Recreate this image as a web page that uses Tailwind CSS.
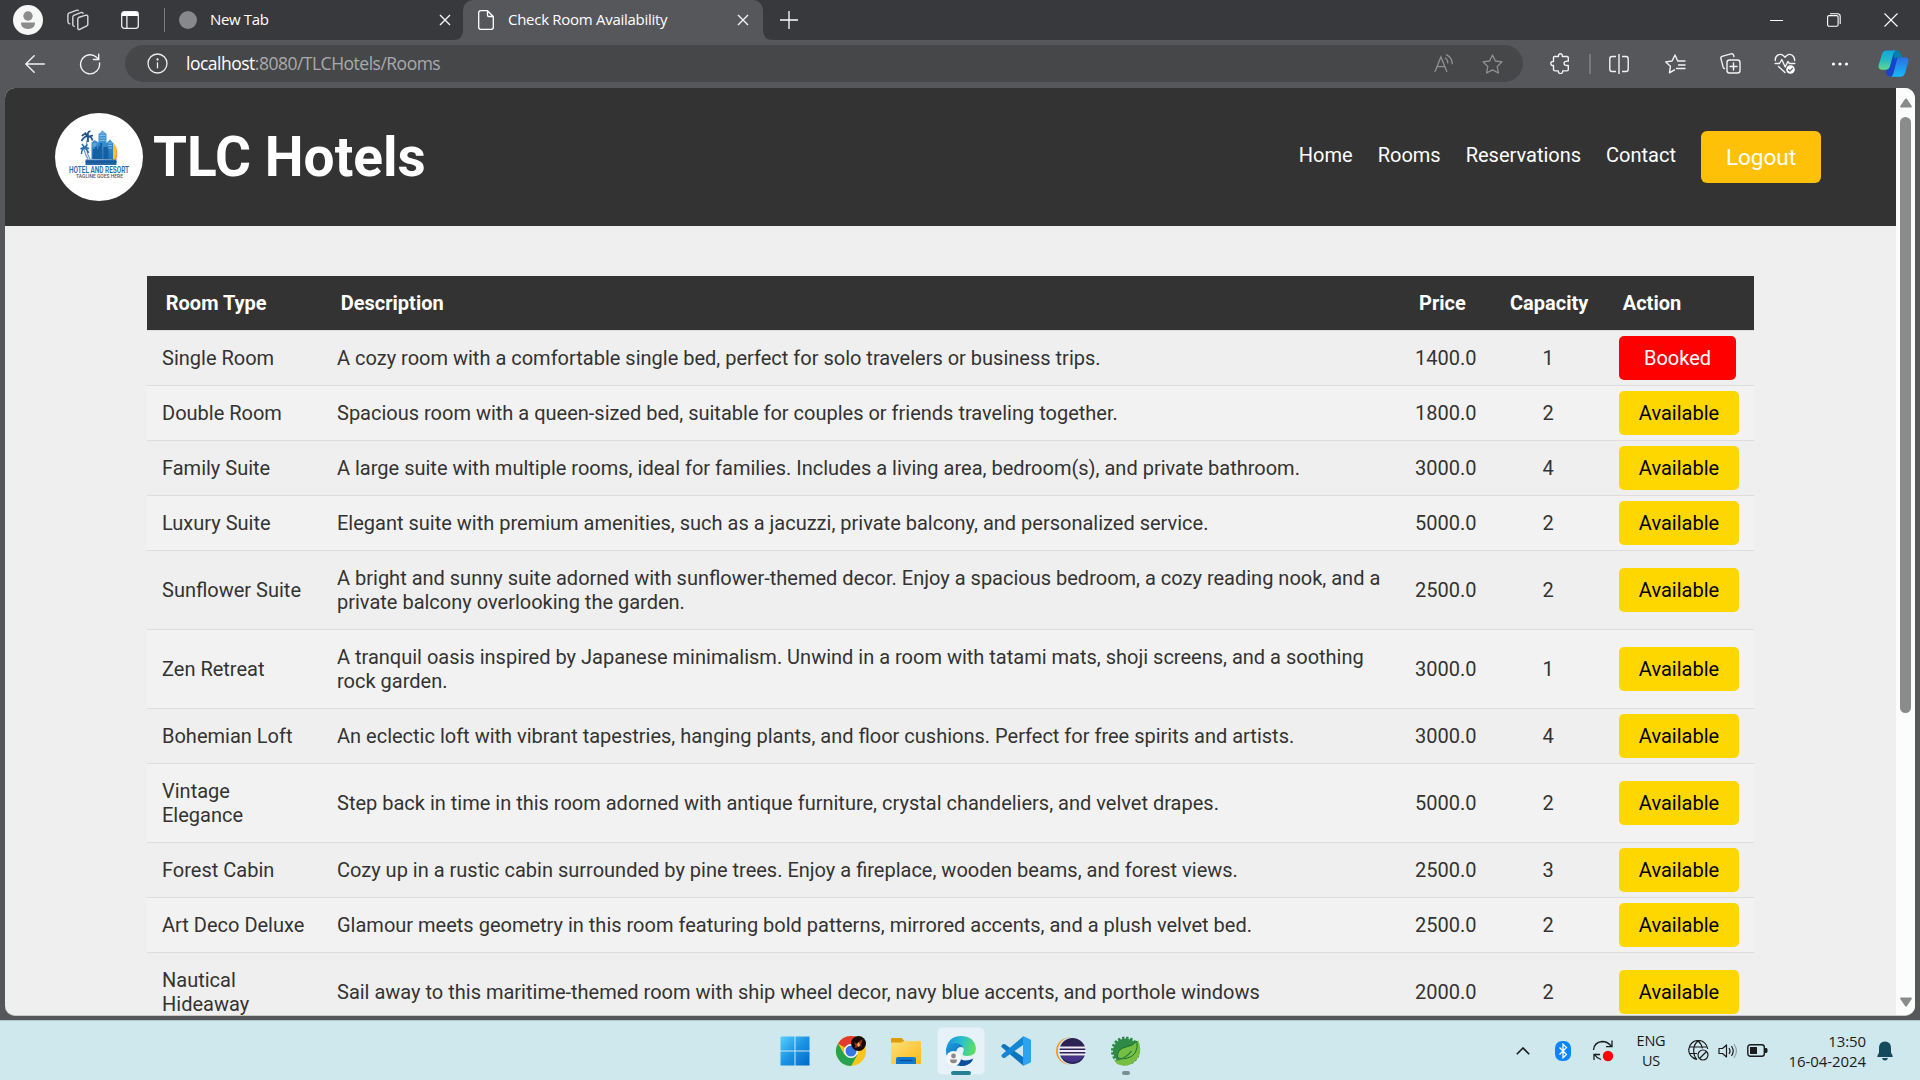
<!DOCTYPE html>
<html lang="en">
<head>
<meta charset="utf-8">
<title>Check Room Availability</title>
<script src="https://cdn.jsdelivr.net/npm/@tailwindcss/browser@4"></script>
</head>
<body class="w-[1920px] h-[1080px] overflow-hidden flex flex-col bg-[#56575b] font-['Open_Sans','Noto_Sans',sans-serif]">

<!-- Tab strip -->
<div class="h-10 shrink-0 flex items-center bg-[#38393c] text-white text-[15px]">
  <div class="w-14 flex justify-center"><svg width="30" height="30" viewBox="0 0 30 30"><circle cx="15" cy="15" r="15" fill="#f7f7f7"/><circle cx="15" cy="11" r="4.7" fill="#8b8b8b"/><path d="M8 17.500h14q.3 6.500-7 6.500t-7-6.500z" fill="#8b8b8b"/></svg></div>
  <div class="w-11 flex justify-center"><svg width="22" height="22" viewBox="0 0 22 22" fill="none" stroke="#d8d8d9" stroke-width="1.400" stroke-linejoin="round"><path d="M11.500 8.500l7.500-2.300q1.800-.4 1.800 1.200v8.100q0 1-1 1.400l-7 3.400q-2 .7-2-1v-9q0-1.400.7-1.800z"/><path d="M7.800 17.500l-1-.3q-1-.4-1-1.700V8.200q0-1.300 1-1.800l7.500-3q1.600-.3 1.800 1.400"/><path d="M3.300 15l-1-.4q-1.400-.6-1.400-1.900V6q0-1.300 1-1.800L10 1.200q1-.3 1.600.6"/></svg></div>
  <div class="w-[60px] flex justify-center"><svg width="18" height="18" viewBox="0 0 18 18"><rect x=".7" y=".7" width="16.600" height="16.600" rx="2.500" fill="none" stroke="#eee" stroke-width="1.300"/><path d="M1 5V3q0-2 2-2h12q2 0 2 2v2zM5.300 5h1.200v12H5.300z" fill="#fff"/></svg></div>
  <div class="ml-1 w-px h-6 bg-[#7a7b7e]"></div>
  <div class="h-10 w-[298px] flex items-center">
    <div class="ml-3.5 size-[18px] rounded-full bg-[#87888a]"></div>
    <span class="ml-[13px] w-[221px] pb-0.5 tracking-[-0.35px]">New Tab</span>
    <svg class="ml-2" width="12" height="12" viewBox="0 0 12 12" stroke="#f4f4f4" stroke-width="1.400"><path d="M1 1l10 10M11 1L1 11"/></svg>
  </div>
  <div class="relative h-10 w-[300px] flex items-center rounded-t-[10px] bg-[#56575b]">
    <svg class="absolute -left-2.5 bottom-0" width="10" height="10" viewBox="0 0 10 10"><path d="M10 0v10H0Q10 10 10 0z" fill="#56575b"/></svg>
    <svg class="absolute -right-2.5 bottom-0" width="10" height="10" viewBox="0 0 10 10"><path d="M0 0v10h10Q0 10 0 0z" fill="#56575b"/></svg>
    <svg class="ml-[15px]" width="16" height="20" viewBox="0 0 16 20" fill="none" stroke="#fff" stroke-width="1.300" stroke-linejoin="round"><path d="M9.500.7H2.700q-2 0-2 2v14.600q0 2 2 2h10.600q2 0 2-2V6.500zM9.500.7v4.600q0 1.200 1.200 1.200h4.600"/></svg>
    <span class="ml-3.5 w-[226px] pb-0.5 tracking-[-0.28px]">Check Room Availability</span>
    <svg class="ml-[3px]" width="12" height="12" viewBox="0 0 12 12" stroke="#f4f4f4" stroke-width="1.400"><path d="M1 1l10 10M11 1L1 11"/></svg>
  </div>
  <svg class="ml-[17px]" width="18" height="18" viewBox="0 0 18 18" stroke="#fff" stroke-width="1.300"><path d="M9 0v18M0 9h18"/></svg>
  <div class="ml-auto flex items-center">
    <div class="w-[57px] flex justify-center"><svg width="13" height="13" stroke="#fff"><path d="M0 6.500h13"/></svg></div>
    <div class="w-[57px] flex justify-center"><svg width="14" height="14" viewBox="0 0 14 14" fill="none" stroke="#fff" stroke-width="1.100"><rect x=".6" y="2.600" width="10.500" height="10.700" rx="1.500"/><path d="M3 .7h7.500q2.700 0 2.700 2.700V11"/></svg></div>
    <div class="w-[58px] flex justify-center"><svg width="14" height="14" viewBox="0 0 14 14" stroke="#fff" stroke-width="1.100"><path d="M.5.500l13 13M13.500.500l-13 13"/></svg></div>
  </div>
</div>

<!-- Toolbar -->
<div class="h-12 shrink-0 flex items-start pt-[5px] text-white">
  <div class="h-[37px] w-[70px] flex items-center justify-center"><svg width="20" height="18" viewBox="0 0 20 18" fill="none" stroke="#f2f2f2" stroke-width="1.400" stroke-linecap="round" stroke-linejoin="round"><path d="M19.300 9H.8M9.200.8L.8 9l8.400 8.200"/></svg></div>
  <div class="h-[37px] w-10 flex items-center justify-center"><svg width="22" height="22" viewBox="0 0 22 22" fill="none" stroke="#f2f2f2" stroke-width="1.400" stroke-linecap="round"><path d="M20.500 10A9.500 9.500 0 1 1 17.500 4.300L19.500 6.200"/><path d="M19.700 1.200v5.300h-5.300"/></svg></div>
  <div class="ml-[15px] h-[37px] w-[1398px] flex items-center rounded-full bg-[#464749]">
    <svg class="ml-[22px]" width="21" height="21" viewBox="0 0 21 21" fill="none" stroke="#eee" stroke-width="1.300"><circle cx="10.500" cy="10.500" r="9.500"/><path d="M10.500 9.300v6"/><circle cx="10.500" cy="6.500" r=".5" fill="#eee"/></svg>
    <span class="ml-[18px] text-[17.500px] pb-px tracking-[-0.5px] text-[#a9aaac]"><span class="text-white">localhost</span>:8080/TLCHotels/Rooms</span>
    <div class="ml-auto flex items-center">
      <div class="w-[49px] flex justify-center"><svg width="20" height="19" viewBox="0 0 20 19" fill="none" stroke="#919294" stroke-width="1.300" stroke-linecap="round"><path d="M1 17.500L6.900 3l5.900 14.500M3 12.700h7.800M11.300 4.200q2.500 1.400 2.500 4.600M12.600.8q5.400 2.500 5.700 9"/></svg></div>
      <div class="w-[49px] flex justify-center"><svg width="21" height="20" viewBox="0 0 21 20" fill="none" stroke="#919294" stroke-width="1.300" stroke-linejoin="round"><path d="M10.500 1l2.900 6 6.600.9-4.800 4.600 1.200 6.500-5.900-3.100L4.600 19l1.200-6.500L1 7.900 7.600 7z"/></svg></div>
      <div class="w-1.5"></div>
    </div>
  </div>
  <div class="ml-2 h-[37px] flex items-center">
    <div class="w-14 pl-px flex justify-center"><svg width="20" height="21" viewBox="0 0 20 21" fill="none" stroke="#f2f2f2" stroke-width="1.400" stroke-linejoin="round"><path d="M4.500 3.500h4q-.2-2.800 1.900-2.800t1.900 2.800H17q1.300 0 1.300 1.300v3.400q-4.300-.4-4.300 2.100t4.300 2.100v4.100q0 1.400-1.300 1.400h-4.300q.1 2.700-2.200 2.700t-2.200-2.700H5q-1.500 0-1.500-1.400v-4Q.8 12.700.8 10.500t2.700-2V4.800q0-1.300 1-1.300z"/></svg></div>
    <div class="w-1.5 flex justify-center"><div class="w-0.5 h-5 bg-[#77787b]"></div></div>
    <div class="w-[52px] flex justify-center"><svg width="20" height="20" viewBox="0 0 20 20" fill="none" stroke="#f2f2f2" stroke-width="1.400"><path d="M10 0v20M7 2.500H3Q.8 2.500.8 4.700v10.600q0 2.200 2.200 2.200h4M13 2.500h4q2.200 0 2.200 2.200v10.600q0 2.200-2.200 2.200h-4"/></svg></div>
    <div class="w-[60px] flex justify-center"><svg width="21" height="20" viewBox="0 0 21 20" fill="none" stroke="#f2f2f2" stroke-width="1.400" stroke-linejoin="round" stroke-linecap="round"><path d="M9.500 15.800l-5 3 .9-6.500L.8 7.900l6.300-.9L10 1l2.700 6h4.800M13.500 11H20M11.500 14.500H20M15 7h5"/></svg></div>
    <div class="w-[50px] flex justify-center"><svg width="21" height="21" viewBox="0 0 21 21" fill="none" stroke="#f2f2f2" stroke-width="1.400" stroke-linecap="round"><rect x="7" y="7" width="13" height="13" rx="2.500"/><path d="M13.500 10v7M10 13.500h7M4.500 15.500q-1 0-1.300-1.200L.9 5.600Q.5 4 2 3.400L11 .9q2-.5 2.500 1l.4 1.700"/></svg></div>
    <div class="w-[60px] flex justify-center"><svg width="22" height="21" viewBox="0 0 22 21" fill="none" stroke="#f2f2f2" stroke-width="1.400" stroke-linecap="round" stroke-linejoin="round"><path d="M1.300 7.500Q1 3.800 3.800 2.100T9.500 2.700L11 4.200l1.500-1.500Q15 .5 17.800 2t2.900 5.500M1.200 10.500h4.300l2.300-4 3.400 7.500 2.700-5.500 1.500 2h5.400M4.500 13.500l6.500 6"/><circle cx="16.500" cy="16.500" r="4.300" fill="#fff" stroke="none"/><path d="M14.500 16.700l1.400 1.300 2.600-2.700" stroke="#56575b" stroke-width="1.200"/></svg></div>
    <div class="w-[50px] flex justify-center"><svg width="18" height="4" viewBox="0 0 18 4" fill="#fff"><circle cx="2.500" cy="2" r="1.600"/><circle cx="9" cy="2" r="1.600"/><circle cx="15.500" cy="2" r="1.600"/></svg></div>
    <div class="w-[55px] pl-px flex justify-center"><svg width="31" height="27" viewBox="0 0 31 27"><defs><linearGradient id="ca" x1="0" y1="0" x2="0" y2="1"><stop offset="0" stop-color="#0fa8de"/><stop offset=".5" stop-color="#27b9c2"/><stop offset="1" stop-color="#62d88d"/></linearGradient><linearGradient id="cb" x1="0" y1="0" x2="0" y2="1"><stop offset="0" stop-color="#2a70e0"/><stop offset="1" stop-color="#18b8fa"/></linearGradient></defs><path d="M8 20l6-19h5q3 0 3.500 3l1 3.500H20L14 26.500h-2.500Q9 26.500 8 23z" fill="#1545cf"/><path d="M15 .4h4q2.700 0 3.600 3L24 7.500h-4q-3 0-3.500 2z" fill="#077fae"/><path d="M8.500.4H18q-1.700.6-2.500 3.200L11.700 17q-.9 2.700-3.500 2.700H4Q-.3 19.700.7 15L4 4Q5 .4 8.500.4z" fill="url(#ca)"/><path d="M20.500 7.300H27q4.200 0 3.300 4.500L27 23q-1 3.700-4.500 3.700H12.800q1.900-.5 2.700-3.200L19 10q.5-2.700 1.500-2.700z" fill="url(#cb)"/></svg></div>
  </div>
</div>

<!-- Page viewport -->
<div class="mx-[5px] h-[928px] shrink-0 flex overflow-hidden rounded-[10px] bg-[#efefef] border-b border-[#c9c9c9] font-[Roboto,sans-serif]">
  <div class="w-[1891px] h-full overflow-hidden">
    <header class="h-[138px] bg-[#333] text-white flex items-start pl-[50px] pr-[75px]">
      <div class="mt-[25px] flex items-center">
        <svg width="88" height="88" viewBox="0 0 88 88"><defs><linearGradient id="bl" x1="0" y1="0" x2="0" y2="1"><stop offset="0" stop-color="#4c9fd8"/><stop offset="1" stop-color="#1f74bb"/></linearGradient></defs><circle cx="44" cy="44" r="44" fill="#fff"/>
          <path d="M58 29q7 9 2 18h-3z" fill="#fdc21d"/><path d="M59.500 31q4 8 0 15.500h1.800q2.500-8-1.800-15.500z" fill="#f28b4c"/>
          <path d="M36.500 46V29.500l3-2.500 4 2.500V21l4-3.500 4 3.500v9l3.500-3.500 3 3.500v16.500z" fill="url(#bl)"/>
          <path d="M38 46V36h2v-3h2v3h1.500v-3h1.500v-3h2v16zM48.500 46V34h5v12z" fill="#1560a3"/>
          <path d="M44.500 22.500h6M44.500 25h6M44.500 27.500h6M45.500 20h4M37.500 31h4M37.500 33h4M53 30h4M53 32.500h4M53 35h4" stroke="#9fd0ef" stroke-width=".7"/>
          <g fill="none" stroke="#1b5288" stroke-width="1.300"><path d="M33 24q-4 12 2 22M29 36q1 6 4 10" stroke="#7d9cbc"/><path d="M27 23q3-4 6 .5q-1-5 2.500-5.500M26.500 28q3-5 6-4.500q4-.5 5 4M30 19.500l3 4 5-1M33 24v5" stroke-width="1.700"/><path d="M25.500 36l3.500-2 5 1.500M26.500 41q0-5 3-6q3 1 4 5M27 31l2.500 3.500 3-3" stroke="#2870b0" stroke-width="1.500"/></g>
          <path d="M30.500 46.500h31V52h-31z" fill="#2469a7"/><path d="M30.500 49h31" stroke="#0c477f" stroke-width=".8"/>
          <text x="44" y="59.500" text-anchor="middle" textLength="60" lengthAdjust="spacingAndGlyphs" font-family="Roboto" font-weight="600" font-size="9" fill="#1f6aab">HOTEL AND RESORT</text>
          <text x="44.500" y="64.500" text-anchor="middle" textLength="47" lengthAdjust="spacingAndGlyphs" font-family="Roboto" font-weight="500" font-size="5.600" fill="#5a5350">TAGLINE GOES HERE</text></svg>
        <h1 class="ml-2.5 text-[55px] leading-[64px] font-bold">TLC Hotels</h1>
      </div>
      <nav class="ml-auto mt-[43px] flex items-start text-[20px] leading-6 gap-[25px]">
        <a class="mt-3">Home</a><a class="mt-3">Rooms</a><a class="mt-3">Reservations</a><a class="mt-3">Contact</a>
        <a class="w-[120px] h-[52px] rounded-[6px] bg-[#ffc107] text-[22.500px] flex items-center justify-center">Logout</a>
      </nav>
    </header>
    <table class="mt-[50px] ml-[142px] w-[1607px] table-fixed border-collapse text-[20px] leading-6 text-[#333] text-left">
      <colgroup><col class="w-[175px]"><col class="w-[1079px]"><col class="w-[91px]"><col class="w-[112px]"><col class="w-[150px]"></colgroup>
      <thead><tr class="h-[54px] bg-[#333] text-white border-b border-[#ddd]"><th class="px-[18.750px] whitespace-nowrap">Room Type</th><th class="px-[18.750px]">Description</th><th class="pl-[18px]">Price</th><th class="pl-[18px]">Capacity</th><th class="px-[18.750px]">Action</th></tr></thead>
      <tbody id="rooms"></tbody>
    </table>
  </div>
  <div class="w-[19px] h-full bg-[#fcfcfc] flex flex-col items-center">
    <svg class="mt-2.5 shrink-0" width="12" height="10" viewBox="0 0 12 10"><path d="M6 .5q.6 0 1 .6l4.700 7q.6 1.400-.8 1.400H1.100Q-.3 9.500.3 8.100l4.700-7q.4-.6 1-.6z" fill="#8b8b8b"/></svg>
    <div class="mt-[9px] w-[11px] h-[596px] shrink-0 rounded-full bg-[#8b8b8b]"></div>
    <svg class="mt-auto mb-2 shrink-0" width="12" height="10" viewBox="0 0 12 10"><path d="M6 9.500q-.6 0-1-.6L.3 1.900Q-.3.500 1.100.500h9.800q1.400 0 .8 1.400L7 8.900q-.4.6-1 .6z" fill="#8b8b8b"/></svg>
  </div>
</div>

<!-- Taskbar -->
<div class="mt-1 h-[60px] shrink-0 flex items-center bg-[#cfe8ee] border-t border-[#b3c6cc] text-[#1b1b1b]">
  <div class="ml-[767px] flex items-center">
    <div class="w-[55px] flex justify-center"><svg width="30" height="30" viewBox="0 0 30 30"><defs><linearGradient id="wn" x1="0" y1="0" x2="1" y2="1"><stop offset="0" stop-color="#55cffb"/><stop offset=".5" stop-color="#1b94e4"/><stop offset="1" stop-color="#0067c7"/></linearGradient></defs><path d="M1 .5h13.500V14.500H.5V1zM15.500.5H29.500V14.500h-14zM.5 15.500h14v14H.5zM15.500 15.500h14v14h-14z" fill="url(#wn)"/></svg></div>
    <div class="w-[57px] flex justify-center"><svg width="32" height="32" viewBox="0 0 32 32"><circle cx="16" cy="16" r="15" fill="#f9c51c"/><path d="M16 16L3 8.500A15 15 0 0 1 29 8.500H16z" fill="#e33b2e"/><path d="M3 8.500A15 15 0 0 0 16 31l6.500-11.300L16 16 9.500 19.700z" fill="#25a34e"/><circle cx="16" cy="16" r="7" fill="#fff"/><circle cx="16" cy="16" r="5.500" fill="#3478e5"/><circle cx="23.500" cy="8.500" r="7.500" fill="#160b09"/><path d="M18 6q4 4 5 2t5-4q-3 5-1 8-3-3-4-1t-3 2q1-4-2-7z" fill="#a5321c"/><path d="M22 9l2-2 1 4-2 1z" fill="#efb14c"/></svg></div>
    <div class="w-[54px] flex justify-center"><svg width="30" height="28" viewBox="0 0 30 28"><defs><linearGradient id="fo" x1="0" y1="0" x2="1" y2="1"><stop offset="0" stop-color="#ffe07a"/><stop offset="1" stop-color="#fbb917"/></linearGradient></defs><path d="M0 2Q0 1 1 1h9q1 0 1.700 1l1.800 2-2 3H0z" fill="#de9c08"/><path d="M0 5.500h10l3-1.500h16q1 0 1 1v21q0 1-1 1H1q-1 0-1-1z" fill="url(#fo)"/><path d="M5 27v-5q0-2 2-2h16q2 0 2 2v5z" fill="#0f78cf"/><path d="M8.500 23.500h13" stroke="#0b4d93" stroke-width="1.300"/></svg></div>
    <div class="w-[55px] flex justify-center"><div class="relative size-12 rounded-[5px] bg-[#e6f2f7] border border-[#dcebf0] flex justify-center items-center"><svg width="30" height="30" viewBox="0 0 30 30"><defs><linearGradient id="e1" x1="0" y1=".3" x2="1" y2=".5"><stop offset="0" stop-color="#1a8fd8"/><stop offset=".5" stop-color="#2cc0cf"/><stop offset="1" stop-color="#5fe05a"/></linearGradient><linearGradient id="e2" x1="0" y1="0" x2="1" y2="1"><stop offset="0" stop-color="#1b9de2"/><stop offset="1" stop-color="#0b4ea0"/></linearGradient></defs><path d="M0 14Q2 0 15 0q13 0 15 12 0 8-8.500 8-6.500 0-4.500-3.500 1.500-3 0-5.500Q12 6 0 14z" fill="url(#e1)"/><path d="M0 14Q2 7 9 7q6 0 8.500 5-3-2-6 .5-3 4 1 9.500 5 6 14.500 2Q23 30 15 30 0 29 0 14z" fill="url(#e2)"/><path d="M12 21q5 6 15.500 1.500Q23 30 15 30q-4-2-3-9z" fill="#0d4f9c"/><circle cx="7.500" cy="22.500" r="7.500" fill="#f4f6f7"/><circle cx="7.500" cy="20" r="2.400" fill="#8a8a8a"/><path d="M4 23.500h7q.2 3.800-3.500 3.800T4 23.500z" fill="#8a8a8a"/></svg><div class="absolute bottom-[-1px] left-[13px] w-5 h-1 rounded-full bg-[#267f92]"></div></div></div>
    <div class="w-[55px] flex justify-center"><svg width="30" height="30" viewBox="0 0 30 30"><path d="M1.500 8.500q-2 1.500-.5 3L22 29.500V21L4 8.300Q2.700 7.500 1.500 8.500z" fill="#0b75c0"/><path d="M1.500 21.500q-2-1.500-.5-3L22 .5V9L4 21.700q-1.300.8-2.500-.2z" fill="#1486d2"/><path d="M22 0l7 3.200q1 .6 1 1.600v20.400q0 1-1 1.600L22 30z" fill="#2aa3f2"/></svg></div>
    <div class="w-[55px] flex justify-center"><svg width="30" height="28" viewBox="0 0 30 28"><circle cx="13.500" cy="14" r="13.500" fill="#f7941e"/><circle cx="15.500" cy="14" r="13.800" fill="#cfe8ee"/><circle cx="16.500" cy="14" r="13" fill="#2c2255"/><path d="M5 19h23q-4 6-11.500 6T5 19z" fill="#44348a"/><path d="M3 10.500h27M3 14h27M3 17.500h27" stroke="#eceaf4" stroke-width="1.800"/></svg></div>
    <div class="relative w-[55px] flex justify-center"><svg width="30" height="30" viewBox="0 0 30 30"><circle cx="14.500" cy="15" r="13" fill="none" stroke="#2e8b46" stroke-width="3" stroke-dasharray="2.400 1.700"/><circle cx="14.500" cy="15" r="12.500" fill="#2e8b46"/><path d="M27 4q5 11-1 19-8 10-20 5l-3-4q9-1 15-5Q26 13 27 4z" fill="#77bf43"/><path d="M26 5q2 15-11 17.500-5 1-8.500-1Q6 13 15 11q7-1 11-6z" fill="#77bf43" stroke="#1f6e35" stroke-width="1"/><path d="M5.500 24q9-1 15-9" fill="none" stroke="#2e8b46" stroke-width="1.300"/></svg><div class="absolute -bottom-[9px] left-6 w-2 h-1 rounded-full bg-[#7d8e93]"></div></div>
  </div>
  <div class="ml-auto mr-4 flex items-center text-[14.500px] leading-5">
    <div class="w-10 flex justify-center"><svg width="14" height="8" viewBox="0 0 14 8" fill="none" stroke="#1b1b1b" stroke-width="1.600"><path d="M.8 7.200L7 1l6.200 6.200"/></svg></div>
    <div class="w-10 flex justify-center"><svg width="16" height="20" viewBox="0 0 16 20"><rect width="16" height="20" rx="7" fill="#0a84ff"/><path d="M4.500 6.500l7 7L8 16.800V3.200l3.500 3.300-7 7" fill="none" stroke="#fff" stroke-width="1.300"/></svg></div>
    <div class="w-10 flex justify-center"><svg width="22" height="22" viewBox="0 0 22 22" fill="none" stroke="#1b1b1b" stroke-width="1.300"><path d="M1.500 10Q2 2.500 10 1.500q6 0 9.500 5M20 .5V6.700h-6M9 19.500Q4.500 18 2.500 14.500M2 20v-5.500h6"/><circle cx="16" cy="16" r="5.200" fill="#f00" stroke="none"/></svg></div>
    <div class="w-14 text-center tracking-[-0.2px]">ENG<br>US</div>
    <div class="w-[38px] flex justify-center"><svg width="21" height="21" viewBox="0 0 21 21" fill="none" stroke="#1b1b1b" stroke-width="1.200"><path d="M8.500 19.300A9.500 9.500 0 1 1 19.700 9M1.500 7h18M1.500 13.500H9M9 19.500Q5.500 16 5.700 10T10 .9q3.500 2.600 4.300 7.500"/><circle cx="15" cy="15" r="5"/><path d="M11.500 18.500l7-7"/></svg></div>
    <div class="w-[21px] flex justify-center"><svg width="20" height="16" viewBox="0 0 20 16" fill="none" stroke="#1b1b1b" stroke-width="1.200" stroke-linejoin="round" stroke-linecap="round"><path d="M1 5.500h3.500L8.500 2v12l-4-3.500H1zM11.200 5.500q1.700 2.500 0 5M13.700 3.500q3 4.500 0 9"/><path d="M16.200 1.500q4.500 6.500 0 13" stroke="#8ea0a5"/></svg></div>
    <div class="w-[38px] flex justify-center"><svg width="21" height="13" viewBox="0 0 21 13"><rect x=".8" y=".8" width="16.500" height="11.400" rx="2.500" fill="none" stroke="#1b1b1b" stroke-width="1.400"/><path d="M3 3h7v7H3zM18 4h1.500l1 1v3l-1 1H18z" fill="#1b1b1b"/></svg></div>
    <div class="w-[90px] text-right whitespace-nowrap text-[15px] tracking-[-0.08px]">13:50<br>16-04-2024</div>
    <div class="w-[38px] flex justify-center"><svg width="16" height="20" viewBox="0 0 16 20" fill="#144a5c"><path d="M8 .5q6 .3 6 6.500v4.500l1.800 3.700q.2.800-.6.800H.8q-.8 0-.6-.8L2 11.500V7Q2 .8 8 .5zM5 17h6q-.6 2.500-3 2.500T5 17z"/></svg></div>
  </div>
</div>

<script>
const rooms = [
  ["Single Room", "A cozy room with a comfortable single bed, perfect for solo travelers or business trips.", "1400.0", 1, true],
  ["Double Room", "Spacious room with a queen-sized bed, suitable for couples or friends traveling together.", "1800.0", 2],
  ["Family Suite", "A large suite with multiple rooms, ideal for families. Includes a living area, bedroom(s), and private bathroom.", "3000.0", 4],
  ["Luxury Suite", "Elegant suite with premium amenities, such as a jacuzzi, private balcony, and personalized service.", "5000.0", 2],
  ["Sunflower Suite", "A bright and sunny suite adorned with sunflower-themed decor. Enjoy a spacious bedroom, a cozy reading nook, and a private balcony overlooking the garden.", "2500.0", 2],
  ["Zen Retreat", "A tranquil oasis inspired by Japanese minimalism. Unwind in a room with tatami mats, shoji screens, and a soothing rock garden.", "3000.0", 1],
  ["Bohemian Loft", "An eclectic loft with vibrant tapestries, hanging plants, and floor cushions. Perfect for free spirits and artists.", "3000.0", 4],
  ["Vintage Elegance", "Step back in time in this room adorned with antique furniture, crystal chandeliers, and velvet drapes.", "5000.0", 2],
  ["Forest Cabin", "Cozy up in a rustic cabin surrounded by pine trees. Enjoy a fireplace, wooden beams, and forest views.", "2500.0", 3],
  ["Art Deco Deluxe", "Glamour meets geometry in this room featuring bold patterns, mirrored accents, and a plush velvet bed.", "2500.0", 2],
  ["Nautical Hideaway", "Sail away to this maritime-themed room with ship wheel decor, navy blue accents, and porthole windows", "2000.0", 2]
];
document.getElementById("rooms").innerHTML = rooms.map(([name, text, price, cap, booked]) => `
  <tr class="border-b border-[#ddd] even:bg-[#f2f2f2]">
    <td class="p-[15px]">${name}</td><td class="p-[15px]">${text}</td><td class="py-[15px] pl-[14px]">${price}</td><td class="p-[15px] text-center">${cap}</td>
    <td class="px-[15px]">${booked
      ? '<div class="-my-2 w-[117px] h-11 rounded-[5px] bg-[#f00] text-white flex items-center justify-center">Booked</div>'
      : '<div class="-my-2 w-[120px] h-11 rounded-[5px] bg-[#ffd700] text-black flex items-center justify-center">Available</div>'}</td>
  </tr>`).join("");
</script>
</body>
</html>
